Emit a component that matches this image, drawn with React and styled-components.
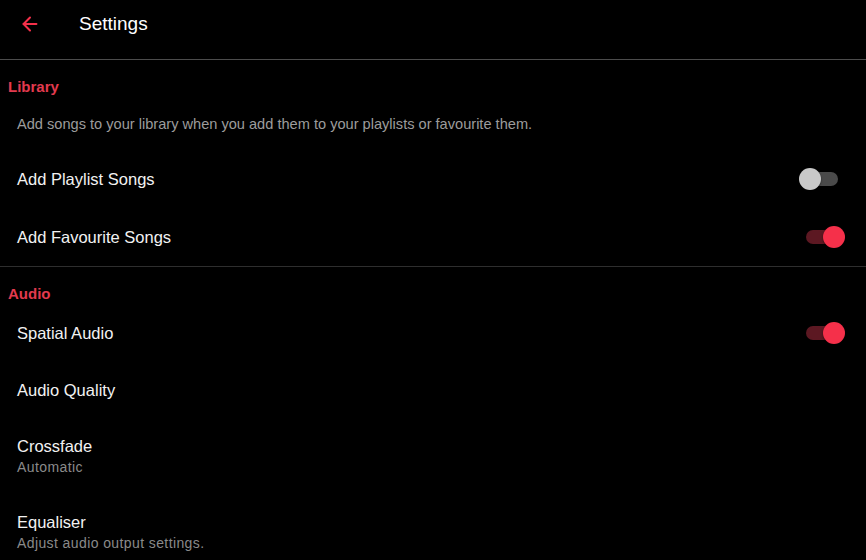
import React, { useState } from 'react';
import styled, { createGlobalStyle } from 'styled-components';
import { ArrowLeft } from 'lucide-react';

const RED = '#f5304a';

const GlobalStyle = createGlobalStyle`
    html, body {
        margin: 0;
        padding: 0;
        background: #000;
        overflow: hidden;
    }
    body {
        font-family: "Liberation Sans", Arial, sans-serif;
        -webkit-font-smoothing: antialiased;
    }
`;

const Page = styled.div`
    width: 866px;
    height: 560px;
    background: #000;
    color: #fff;
    display: flex;
    flex-direction: column;
    overflow: hidden;
`;

const Header = styled.header`
    height: 60px;
    flex-shrink: 0;
    display: flex;
    align-items: flex-start;
    border-bottom: 1px solid #4c4c4c;
    box-sizing: border-box;
    padding: 12px 0 0 17px;
`;

const BackButton = styled.button`
    background: none;
    border: none;
    padding: 0;
    width: 26px;
    height: 24px;
    display: flex;
    align-items: center;
    justify-content: center;
    color: ${RED};
    cursor: pointer;
`;

const Title = styled.h1`
    margin: 0 0 0 36px;
    font-size: 19px;
    font-weight: 400;
    line-height: 24px;
    color: #fff;
`;

const Section = styled.section`
    display: flex;
    flex-direction: column;
    border-bottom: ${p => (p.$last ? 'none' : '1px solid #2e2e2e')};
`;

const SectionTitle = styled.h2`
    margin: 0;
    padding: 17px 0 0 8px;
    font-size: 15px;
    line-height: 20px;
    font-weight: 700;
    color: #e23a4e;
`;

const Description = styled.p`
    margin: 17px 0 16px;
    padding: 0 17px;
    font-size: 14.6px;
    line-height: 20px;
    color: #9c9c9c;
`;

const Row = styled.div`
    display: flex;
    align-items: center;
    justify-content: space-between;
    padding: 18px 21px 18px 17px;
`;

const RowText = styled.div`
    display: flex;
    flex-direction: column;
`;

const Label = styled.span`
    font-size: 16.5px;
    line-height: 20px;
    color: #f2f2f2;
`;

const SubLabel = styled.span`
    margin-top: 2px;
    font-size: 14px;
    letter-spacing: 0.4px;
    line-height: 18px;
    color: #8a8a8a;
`;

const SwitchBox = styled.div`
    position: relative;
    width: 46px;
    height: 22px;
    cursor: pointer;
`;

const Track = styled.div`
    position: absolute;
    left: 7px;
    top: 4px;
    width: 32px;
    height: 14px;
    border-radius: 7px;
    background: ${p => (p.$on ? '#5c1822' : '#4a4a4a')};
`;

const Thumb = styled.div`
    position: absolute;
    top: 0;
    left: ${p => (p.$on ? '24px' : '0')};
    width: 22px;
    height: 22px;
    border-radius: 50%;
    background: ${p => (p.$on ? RED : '#c9c9c9')};
    box-shadow: 0 1px 2px rgba(0, 0, 0, 0.5);
`;

const Switch = ({ initial }) => {
    const [on, setOn] = useState(initial);
    return (
        <SwitchBox role="switch" aria-checked={on} onClick={() => setOn(v => !v)}>
            <Track $on={on} />
            <Thumb $on={on} />
        </SwitchBox>
    );
};

const SettingRow = ({ label, sub, toggle }) => (
    <Row>
        <RowText>
            <Label>{label}</Label>
            {sub && <SubLabel>{sub}</SubLabel>}
        </RowText>
        {toggle !== undefined && <Switch initial={toggle} />}
    </Row>
);

const App = () => {
    return (
        <Page>
            <GlobalStyle />
            <Header>
                <BackButton aria-label="Back">
                    <ArrowLeft size={22} strokeWidth={2.2} />
                </BackButton>
                <Title>Settings</Title>
            </Header>
            <Section>
                <SectionTitle>Library</SectionTitle>
                <Description>
                    Add songs to your library when you add them to your playlists or favourite them.
                </Description>
                <SettingRow label="Add Playlist Songs" toggle={false} />
                <SettingRow label="Add Favourite Songs" toggle={true} />
            </Section>
            <Section $last>
                <SectionTitle>Audio</SectionTitle>
                <SettingRow label="Spatial Audio" toggle={true} />
                <SettingRow label="Audio Quality" />
                <SettingRow label="Crossfade" sub="Automatic" />
                <SettingRow label="Equaliser" sub="Adjust audio output settings." />
            </Section>
        </Page>
    );
};

export default App;
